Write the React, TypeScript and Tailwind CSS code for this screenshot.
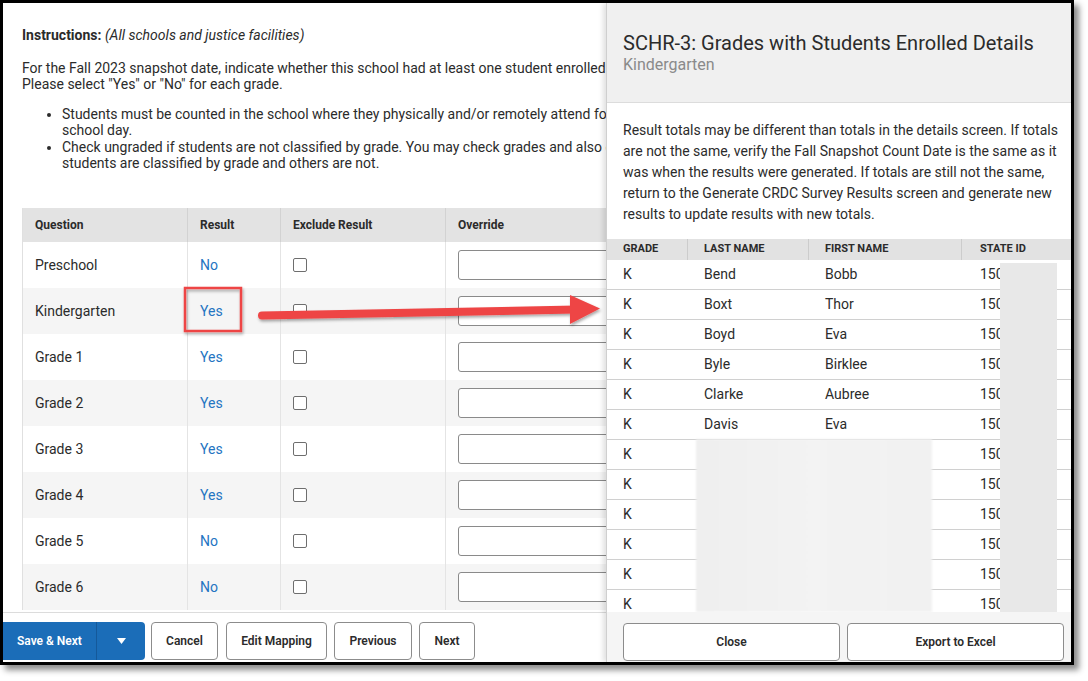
import React from "react";

const questions = [
  { name: "Preschool", result: "No" },
  { name: "Kindergarten", result: "Yes" },
  { name: "Grade 1", result: "Yes" },
  { name: "Grade 2", result: "Yes" },
  { name: "Grade 3", result: "Yes" },
  { name: "Grade 4", result: "Yes" },
  { name: "Grade 5", result: "No" },
  { name: "Grade 6", result: "No" },
];

const students = [
  { last: "Bend", first: "Bobb" },
  { last: "Boxt", first: "Thor" },
  { last: "Boyd", first: "Eva" },
  { last: "Byle", first: "Birklee" },
  { last: "Clarke", first: "Aubree" },
  { last: "Davis", first: "Eva" },
  { last: "", first: "" },
  { last: "", first: "" },
  { last: "", first: "" },
  { last: "", first: "" },
  { last: "", first: "" },
  { last: "", first: "" },
];

function Instructions() {
  return (
    <div className="pl-[19px] pt-[24px] text-[14px] leading-[16px] text-[#2b2b2b] whitespace-nowrap">
      <p>
        <span className="font-bold">Instructions:</span> <span className="italic">(All schools and justice facilities)</span>
      </p>
      <p className="mt-[17px]">
        For the Fall 2023 snapshot date, indicate whether this school had at least one student enrolled in each grade.
        <br />
        Please select "Yes" or "No" for each grade.
      </p>
      <ul className="list-disc pl-[40px] mt-[14px] flex flex-col gap-[1px]">
        <li>
          Students must be counted in the school where they physically and/or remotely attend for the majority of the
          <br />
          school day.
        </li>
        <li>
          Check ungraded if students are not classified by grade. You may check grades and also check ungraded if some
          <br />
          students are classified by grade and others are not.
        </li>
      </ul>
    </div>
  );
}

function QuestionTable() {
  return (
    <div className="ml-[19px] mt-[37px] w-[760px] border-l border-[#e0e0e0] text-[#2b2b2b]">
      <div className="grid grid-cols-[165px_93px_165px_1fr] h-[34px] bg-[#e3e3e3] text-[12px] font-bold">
        <div className="flex items-center pl-[12px] border-r border-[#d2d2d2]">Question</div>
        <div className="flex items-center pl-[12px] border-r border-[#d2d2d2]">Result</div>
        <div className="flex items-center pl-[12px] border-r border-[#d2d2d2]">Exclude Result</div>
        <div className="flex items-center pl-[12px]">Override</div>
      </div>
      {questions.map((q, i) => (
        <div
          key={q.name}
          className={
            "grid grid-cols-[165px_93px_165px_1fr] h-[46px] text-[14px] " +
            (i % 2 === 1 ? "bg-[#f5f5f5]" : "bg-white")
          }
        >
          <div className="flex items-center pl-[12px] border-r border-[#e4e4e4]">{q.name}</div>
          <div className="flex items-center pl-[12px] border-r border-[#e4e4e4] text-[#2474c2]">{q.result}</div>
          <div className="flex items-center pl-[12px] border-r border-[#e4e4e4]">
            <div className="w-[14px] h-[14px] border-[1.5px] border-[#6e6e6e] rounded-[2px] bg-white" />
          </div>
          <div className="flex items-center pl-[12px]">
            <div className="h-[30px] w-[300px] border border-[#8a8a8a] rounded-[3px] bg-white" />
          </div>
        </div>
      ))}
    </div>
  );
}

function ActionBar() {
  const btn =
    "h-[38px] flex items-center justify-center border border-[#8c8c8c] rounded-[4px] bg-white text-[12px] font-semibold text-[#2b2b2b]";
  return (
    <div className="h-[50px] shrink-0 border-t border-[#dcdcdc] bg-white pt-[9px] flex items-start">
      <div className="h-[38px] w-[142px] flex bg-[#1b6db8] rounded-r-[4px] text-white text-[12px] font-semibold">
        <div className="w-[94px] flex items-center pl-[14px] border-r border-[#15599a]">Save &amp; Next</div>
        <div className="flex-1 flex items-center justify-center">
          <svg width="9" height="6" viewBox="0 0 9 6">
            <path d="M0 0 L9 0 L4.5 6 Z" fill="white" />
          </svg>
        </div>
      </div>
      <div className={btn + " ml-[6px] w-[67px]"}>Cancel</div>
      <div className={btn + " ml-[8px] w-[101px]"}>Edit Mapping</div>
      <div className={btn + " ml-[7px] w-[78px]"}>Previous</div>
      <div className={btn + " ml-[7px] w-[56px]"}>Next</div>
    </div>
  );
}

function DetailPanel() {
  const foot =
    "flex-1 h-[38px] flex items-center justify-center border border-[#8c8c8c] rounded-[4px] bg-white text-[12px] font-semibold text-[#2b2b2b]";
  return (
    <div className="absolute top-0 bottom-0 left-[603px] right-0 bg-white border-l border-[#cfcfcf] shadow-[-3px_0_5px_rgba(0,0,0,0.12)] flex flex-col text-[#2b2b2b]">
      <div className="h-[100px] shrink-0 bg-[#f0f0f0] border-b border-[#dcdcdc] pl-[16px] pt-[28px]">
        <div className="text-[20px] leading-[24px]">SCHR-3: Grades with Students Enrolled Details</div>
        <div className="text-[16px] leading-[20px] text-[#8a8a8a]">Kindergarten</div>
      </div>
      <div className="pl-[16px] pt-[17px] pb-[14px] text-[14px] leading-[21px] whitespace-nowrap">
        Result totals may be different than totals in the details screen. If totals
        <br />
        are not the same, verify the Fall Snapshot Count Date is the same as it
        <br />
        was when the results were generated. If totals are still not the same,
        <br />
        return to the Generate CRDC Survey Results screen and generate new
        <br />
        results to update results with new totals.
      </div>
      <div className="grid grid-cols-[81px_121px_153px_1fr] h-[21px] shrink-0 bg-[#e2e2e2] text-[11px] font-bold uppercase">
        <div className="flex items-center pl-[16px] border-r border-[#cccccc]">Grade</div>
        <div className="flex items-center pl-[16px] border-r border-[#cccccc]">Last Name</div>
        <div className="flex items-center pl-[16px] border-r border-[#cccccc]">First Name</div>
        <div className="flex items-center pl-[18px]">State ID</div>
      </div>
      <div className="flex-1 min-h-0 overflow-hidden relative">
        {students.map((s, i) => (
          <div key={i} className="grid grid-cols-[81px_121px_153px_1fr] h-[30px] border-b border-[#d0d0d0] text-[14px]">
            <div className="flex items-center pl-[16px]">K</div>
            <div className="flex items-center pl-[16px]">{s.last}</div>
            <div className="flex items-center pl-[16px]">{s.first}</div>
            <div className="flex items-center pl-[18px]">150</div>
          </div>
        ))}
        <div className="absolute left-[393px] top-[3px] bottom-0 w-[57px] bg-[#e8e8e8] blur-[0.5px]" />
        <div className="absolute left-[89px] top-[179px] bottom-0 w-[236px] bg-gradient-to-r from-[#efefef] via-[#f3f3f3] to-[#f1f1f1] blur-[1px]" />
      </div>
      <div className="h-[50px] shrink-0 bg-[#f5f5f5] pt-[11px] pl-[16px] pr-[7px] flex gap-[7px]">
        <div className={foot}>Close</div>
        <div className={foot}>Export to Excel</div>
      </div>
    </div>
  );
}

function Annotation() {
  return (
    <svg className="absolute left-0 top-0 pointer-events-none" width="1088" height="681">
      <defs>
        <filter id="sh" x="-10%" y="-50%" width="120%" height="200%">
          <feDropShadow dx="1" dy="2" stdDeviation="1.5" floodColor="#000" floodOpacity="0.35" />
        </filter>
      </defs>
      <g filter="url(#sh)">
        <rect x="185" y="288" width="56" height="43" fill="none" stroke="#ee4545" strokeWidth="2.5" />
        <line x1="262" y1="315.5" x2="576" y2="309.5" stroke="#ee4545" strokeWidth="8" strokeLinecap="round" />
        <path d="M570 295 L600 308.5 L570 324 Z" fill="#ee4545" />
      </g>
    </svg>
  );
}

export default function App() {
  return (
    <div className="relative w-[1088px] h-[681px] bg-white font-[Roboto,sans-serif] overflow-hidden">
      <div className="relative w-[1074px] h-[665px] border-[3px] border-black shadow-[5px_5px_6px_rgba(0,0,0,0.45)] flex flex-col overflow-hidden bg-white">
        <div className="flex-1 min-h-0 w-[603px] overflow-hidden">
          <Instructions />
          <QuestionTable />
        </div>
        <ActionBar />
        <DetailPanel />
      </div>
      <Annotation />
    </div>
  );
}
